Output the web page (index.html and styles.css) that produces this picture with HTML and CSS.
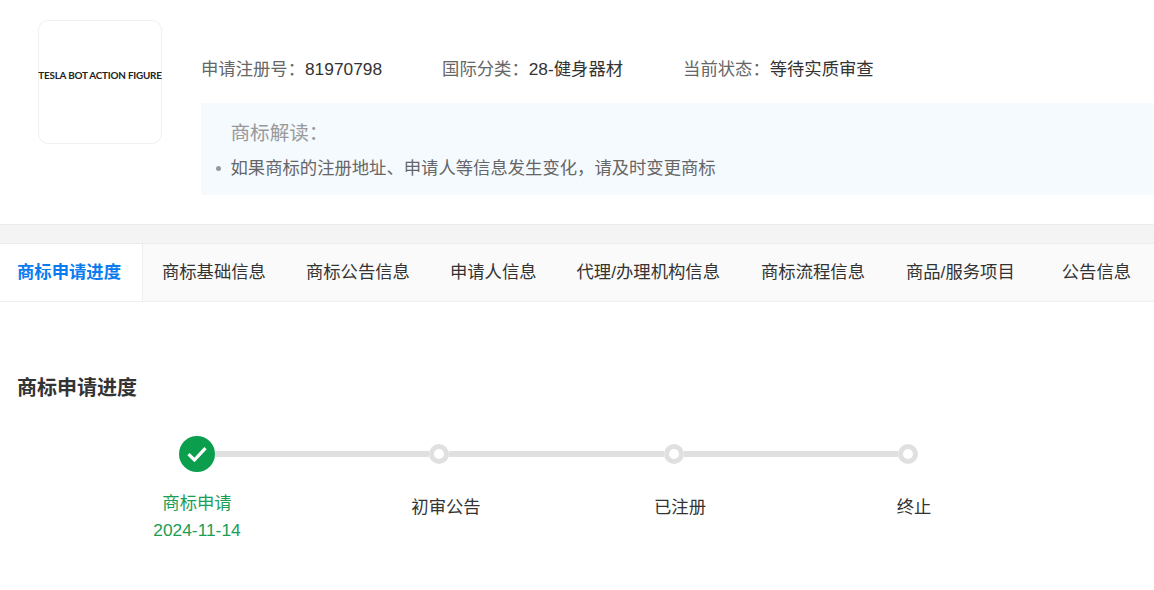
FILE: index.html
```html
<!DOCTYPE html>
<html lang="zh">
<head>
<meta charset="utf-8">
<title>商标申请进度</title>
<link rel="stylesheet" href="styles.css">
</head>
<body>
<header class="summary">
  <div class="logo"><span>TESLA BOT ACTION FIGURE</span></div>
  <div class="details">
    <div class="facts">
      <div class="fact"><span class="fact-label">申请注册号&#xFF1A;</span><span>81970798</span></div>
      <div class="fact"><span class="fact-label">国际分类&#xFF1A;</span><span>28-健身器材</span></div>
      <div class="fact"><span class="fact-label">当前状态&#xFF1A;</span><span>等待实质审查</span></div>
    </div>
    <div class="reading">
      <div class="reading-title">商标解读&#xFF1A;</div>
      <ul class="reading-list">
        <li>如果商标的注册地址、申请人等信息发生变化&#xFF0C;请及时变更商标</li>
      </ul>
    </div>
  </div>
</header>
<div class="band"></div>
<nav class="tabs">
  <a class="tab tab-active">商标申请进度</a>
  <a class="tab tab-next">商标基础信息</a>
  <a class="tab">商标公告信息</a>
  <a class="tab">申请人信息</a>
  <a class="tab tab-wide">代理/办理机构信息</a>
  <a class="tab tab-wide">商标流程信息</a>
  <a class="tab">商品/服务项目</a>
  <a class="tab tab-last">公告信息</a>
</nav>
<main class="progress">
  <h2 class="progress-title">商标申请进度</h2>
  <div class="track">
    <span class="node-done">
      <svg width="20" height="16" viewBox="0 0 20 16"><path d="M1.5 8.2 7.4 14 18.5 2.2" fill="none" stroke="#fff" stroke-width="3.2"/></svg>
    </span>
    <span class="line"></span><span class="node"></span>
    <span class="line"></span><span class="node"></span>
    <span class="line"></span><span class="node"></span>
  </div>
  <div class="steps">
    <div class="step step-done"><div>商标申请</div><div class="step-date">2024-11-14</div></div>
    <div class="step step-2">初审公告</div>
    <div class="step step-3">已注册</div>
    <div class="step step-4">终止</div>
  </div>
</main>
</body>
</html>
```
FILE: styles.css
```css
* { box-sizing: border-box; }
html, body { margin: 0; padding: 0; }
body {
  width: 1154px;
  height: 590px;
  overflow: hidden;
  background: #fff;
  color: #333;
  font-family: "Liberation Sans", "Noto Sans CJK SC", sans-serif;
  font-size: 17.33px;
}
.summary {
  display: flex;
  height: 224px;
  padding: 20px 0 0 38px;
}
.logo {
  width: 124px;
  height: 124px;
  border: 1px solid #f0f0f0;
  border-radius: 10px;
  display: flex;
  align-items: center;
  justify-content: center;
  flex-shrink: 0;
}
.logo span {
  font-family: Lato, sans-serif;
  font-weight: 700;
  font-size: 9.9px;
  letter-spacing: -0.2px;
  color: #222;
  white-space: nowrap;
  position: relative;
  top: -7px;
}
.details {
  flex: 1;
  margin-left: 39px;
  display: flex;
  flex-direction: column;
}
.facts {
  display: flex;
  gap: 60px;
  height: 83px;
  padding: 36px 0 0;
  line-height: 26px;
}
.fact-label { color: #666; }
.reading {
  height: 92px;
  background: #f5faff;
  padding: 16px 0 0 29.5px;
}
.reading-title {
  color: #999;
  font-size: 19.6px;
  line-height: 28px;
}
.reading-list {
  list-style: none;
  margin: 8px 0 0;
  padding: 0;
  color: #666;
  line-height: 26px;
}
.reading-list li { position: relative; }
.reading-list li::before {
  content: "";
  position: absolute;
  left: -14.5px;
  top: 11px;
  width: 5px;
  height: 5px;
  border-radius: 50%;
  background: #999;
}
.band {
  height: 20px;
  background: #f4f4f4;
  border-top: 1px solid #ececec;
  border-bottom: 1px solid #ececec;
}
.tabs {
  display: flex;
  height: 58px;
  background: #fafafa;
  border-bottom: 1px solid #efefef;
}
.tab {
  padding: 0 20px;
  line-height: 57px;
  white-space: nowrap;
  color: #333;
}
.tab-active {
  padding: 0 21px 0 17px;
  background: #fff;
  border-right: 1px solid #efefef;
  color: #0a7cf0;
  font-weight: 700;
}
.tab-next { padding-left: 19px; }
.tab-wide { padding-right: 21px; }
.tab-last { margin-left: 7px; }
.progress { padding: 0 0 0 17px; }
.progress-title {
  margin: 72px 0 0;
  font-size: 20px;
  line-height: 28px;
  font-weight: 700;
  color: #333;
}
.track {
  display: flex;
  align-items: center;
  width: 739px;
  height: 36px;
  margin: 34px 0 0 162px;
}
.node-done {
  width: 36px;
  height: 36px;
  border-radius: 50%;
  background: #0b9e4d;
  display: flex;
  align-items: center;
  justify-content: center;
  flex-shrink: 0;
}
.line {
  flex: 1;
  height: 6px;
  background: #e0e0e0;
}
.node {
  width: 20px;
  height: 20px;
  border-radius: 50%;
  border: 5px solid #e0e0e0;
  background: #fff;
  flex-shrink: 0;
}
.steps {
  display: flex;
  margin-top: 18px;
  text-align: center;
  color: #333;
  line-height: 26px;
}
.step { padding-top: 4px; width: 120px; }
.step-done {
  padding-top: 0;
  margin-left: 120px;
  color: #1a9d55;
  line-height: 26px;
}
.step-date { font-size: 17.33px; margin-top: 1px; }
.step-2 { margin-left: 129px; }
.step-3 { margin-left: 114px; }
.step-4 { margin-left: 114px; }
```
